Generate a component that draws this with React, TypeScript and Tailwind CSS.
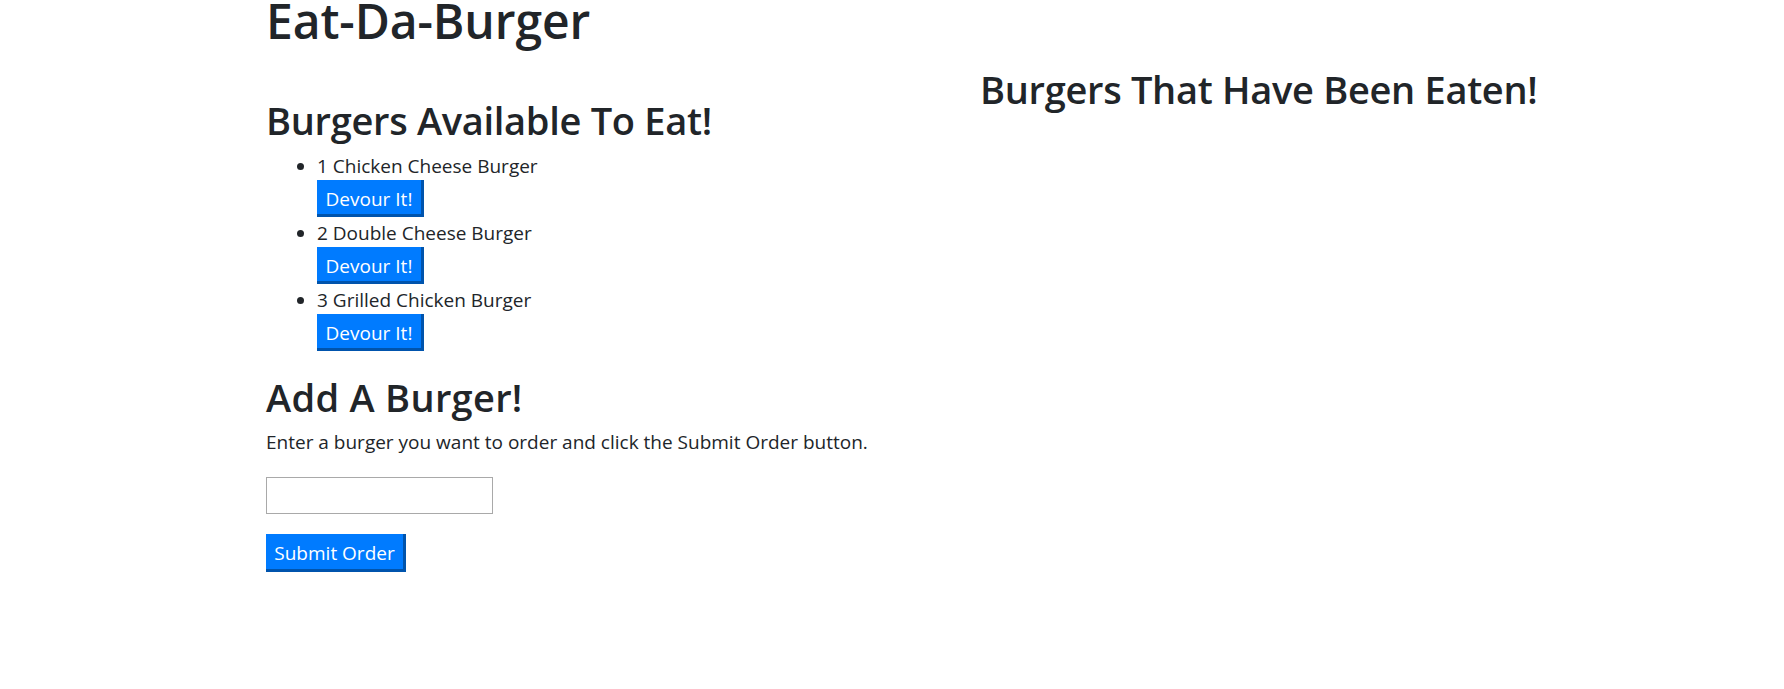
import { FC } from 'react';

const burgers = [
  { id: 1, name: 'Chicken Cheese Burger' },
  { id: 2, name: 'Double Cheese Burger' },
  { id: 3, name: 'Grilled Chicken Burger' },
];

const BlueButton: FC<{ label: string; className?: string }> = ({ label, className = '' }) => (
  <button
    type="button"
    className={`flex items-center justify-center border-r-[3px] border-b-[3px] border-[#0054ad] bg-[#007bff] pt-[3px] text-[19px] leading-[30px] text-white ${className}`}
  >
    {label}
  </button>
);

export default function App() {
  return (
    <div className="min-h-screen bg-white font-['Open_Sans',sans-serif] text-[#212529]">
      <div className="pl-[266px]">
        <h1 className="text-[48px] font-semibold leading-[42px] tracking-[-0.1px]">Eat-Da-Burger</h1>
        <div className="mt-[22px] grid grid-cols-[714px_1fr]">
          <section>
            <h2 className="mt-[31px] mb-[5px] text-[38px] font-semibold leading-[50px] tracking-[-0.3px]">
              Burgers Available To Eat!
            </h2>
            <ul className="list-disc pl-[51px]">
              {burgers.map((burger) => (
                <li key={burger.id} className="text-[19px] leading-[30px]">
                  <div className="h-[30px] pt-[1px]">
                    {burger.id} {burger.name}
                  </div>
                  <BlueButton label="Devour It!" className="h-[37px] w-[107px]" />
                </li>
              ))}
            </ul>
            <h2 className="mt-[21px] mb-[5px] text-[38px] font-semibold leading-[50px] tracking-[0.3px]">
              Add A Burger!
            </h2>
            <p className="mb-[20px] text-[19px] leading-[30px]">
              Enter a burger you want to order and click the Submit Order button.
            </p>
            <input type="text" className="block h-[37px] w-[227px] border border-[#a9a9a9] px-2 text-[19px]" />
            <BlueButton label="Submit Order" className="mt-[20px] h-[38px] w-[140px]" />
          </section>
          <section>
            <h2 className="text-[38px] font-semibold leading-[50px] tracking-[-0.3px]">
              Burgers That Have Been Eaten!
            </h2>
          </section>
        </div>
      </div>
    </div>
  );
}
